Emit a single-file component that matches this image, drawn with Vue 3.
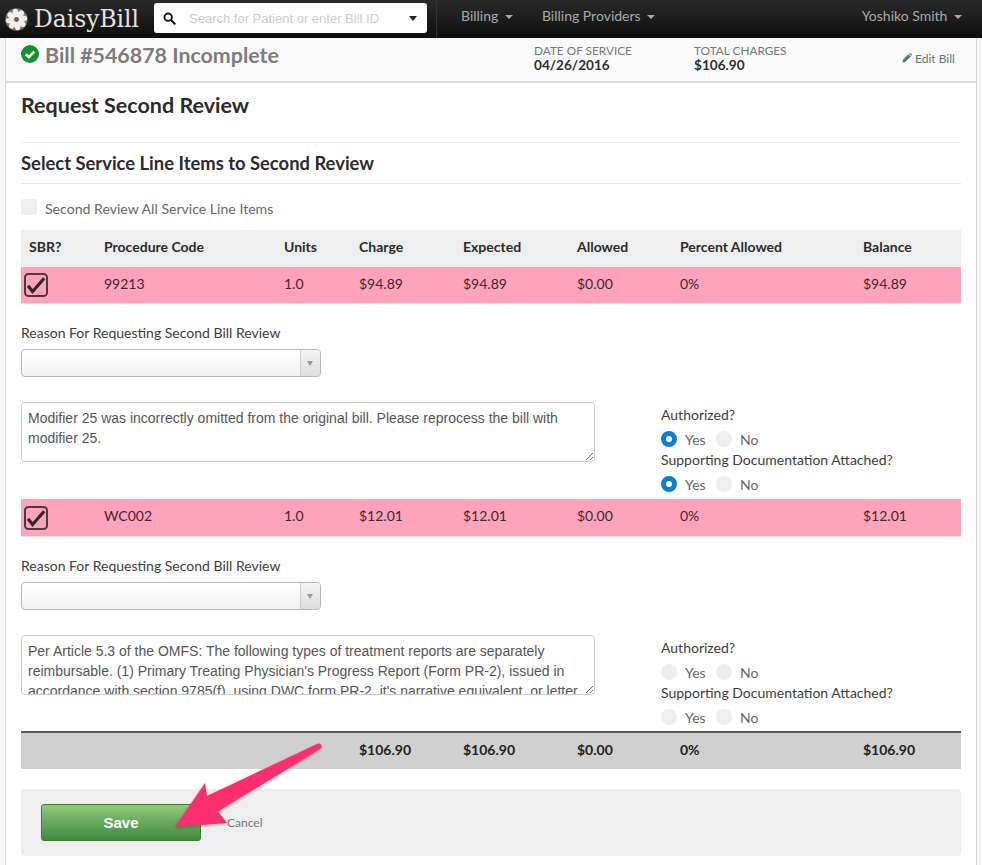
<script setup>
const columns = ['SBR?', 'Procedure Code', 'Units', 'Charge', 'Expected', 'Allowed', 'Percent Allowed', 'Balance']
const lines = [
  {
    code: '99213', units: '1.0', charge: '$94.89', expected: '$94.89', allowed: '$0.00', percent: '0%', balance: '$94.89',
    note: 'Modifier 25 was incorrectly omitted from the original bill. Please reprocess the bill with modifier 25.',
    answered: true
  },
  {
    code: 'WC002', units: '1.0', charge: '$12.01', expected: '$12.01', allowed: '$0.00', percent: '0%', balance: '$12.01',
    note: "Per Article 5.3 of the OMFS: The following types of treatment reports are separately reimbursable. (1) Primary Treating Physician's Progress Report (Form PR-2), issued in accordance with section 9785(f), using DWC form PR-2, it's narrative equivalent, or letter",
    answered: false
  }
]
const petals = [0, 45, 90, 135, 180, 225, 270, 315]
</script>

<template>
  <div class="screen">
    <header class="nav">
      <div class="brand">
        <svg class="flower" viewBox="0 0 23 23" width="23" height="23">
          <circle cx="11.5" cy="11.5" r="11.2" fill="#7d726c" />
          <ellipse v-for="a in petals" :key="a" cx="10.4" cy="5.2" rx="2.9" ry="4.4" fill="#f1eeec" :transform="`rotate(${a} 11.5 11.5)`" />
          <circle cx="11.5" cy="11.5" r="2.4" fill="#6d625d" />
        </svg>
        <span class="brand-name">DaisyBill</span>
      </div>
      <div class="search">
        <svg class="glass" viewBox="0 0 14 14" width="13" height="13">
          <circle cx="5.6" cy="5.6" r="4" fill="none" stroke="#111" stroke-width="2" />
          <path d="M8.6 8.6 L12.6 12.6" stroke="#111" stroke-width="2.2" stroke-linecap="round" />
        </svg>
        <span class="placeholder">Search for Patient or enter Bill ID</span>
        <i class="search-caret"></i>
      </div>
      <nav class="menu">
        <span class="menu-item first">Billing <i class="caret"></i></span>
        <span class="menu-item second">Billing Providers <i class="caret"></i></span>
      </nav>
      <span class="menu-item user">Yoshiko Smith <i class="caret"></i></span>
    </header>

    <main class="page">
      <section class="bill-head">
        <div class="bill-title">
          <svg viewBox="0 0 18 18" width="18" height="18">
            <circle cx="9" cy="9" r="9" fill="#12912c" />
            <path d="M4.8 9.2 L7.8 12.1 L13.2 6.6" fill="none" stroke="#fff" stroke-width="2.6" />
          </svg>
          <h1>Bill #546878 Incomplete</h1>
        </div>
        <div class="meta date">
          <span>DATE OF SERVICE</span>
          <strong>04/26/2016</strong>
        </div>
        <div class="meta total">
          <span>TOTAL CHARGES</span>
          <strong>$106.90</strong>
        </div>
        <a class="edit">
          <svg viewBox="0 0 12 12" width="10" height="10">
            <path d="M0.5 11.5 L1.2 8.2 L7.8 1.6 L10.4 4.2 L3.8 10.8 Z M8.6 0.8 L9.4 0.3 Q10 0 10.5 0.4 L11.6 1.5 Q12 2 11.7 2.6 L11.2 3.4 Z" fill="#4f7a63" />
          </svg>
          Edit Bill
        </a>
      </section>

      <section class="content">
        <h2>Request Second Review</h2>
        <h3>Select Service Line Items to Second Review</h3>

        <label class="all">
          <i class="blank-box"></i>
          <span>Second Review All Service Line Items</span>
        </label>

        <div class="row head">
          <span v-for="c in columns" :key="c">{{ c }}</span>
        </div>

        <template v-for="(line, i) in lines" :key="line.code">
          <div class="row item" :class="{ tall: i === 1 }">
            <span class="box-cell">
              <svg viewBox="0 0 24 24" width="24" height="24">
                <rect x="1" y="1" width="22" height="22" rx="3.5" fill="none" stroke="#4a3843" stroke-width="2" />
                <path d="M4 12.7 L8.6 18.6 L20.2 5.3" fill="none" stroke="#2e2830" stroke-width="3.2" />
              </svg>
            </span>
            <span>{{ line.code }}</span>
            <span>{{ line.units }}</span>
            <span>{{ line.charge }}</span>
            <span>{{ line.expected }}</span>
            <span>{{ line.allowed }}</span>
            <span>{{ line.percent }}</span>
            <span>{{ line.balance }}</span>
          </div>

          <div class="detail" :class="{ short: i === 1 }">
            <div class="reason">
              <label>Reason For Requesting Second Bill Review</label>
              <div class="select"><span class="select-arrow"></span></div>
              <textarea readonly :value="line.note"></textarea>
            </div>
            <div class="questions">
              <p>Authorized?</p>
              <div class="radios">
                <i class="radio" :class="{ on: line.answered }"></i><span class="yes">Yes</span>
                <i class="radio"></i><span>No</span>
              </div>
              <p>Supporting Documentation Attached?</p>
              <div class="radios">
                <i class="radio" :class="{ on: line.answered }"></i><span class="yes">Yes</span>
                <i class="radio"></i><span>No</span>
              </div>
            </div>
          </div>
        </template>

        <div class="row totals">
          <span></span><span></span><span></span>
          <span>$106.90</span>
          <span>$106.90</span>
          <span>$0.00</span>
          <span>0%</span>
          <span>$106.90</span>
        </div>

        <div class="actions">
          <button class="save">Save</button>
          <a class="cancel">Cancel</a>
        </div>
      </section>
    </main>

    <svg class="arrow" viewBox="0 0 982 865" width="982" height="865">
      <defs>
        <filter id="arrow-shadow" x="-20%" y="-20%" width="140%" height="140%">
          <feDropShadow dx="0" dy="1" stdDeviation="1.5" flood-color="#000" flood-opacity="0.3" />
        </filter>
      </defs>
      <path
        d="M318.5 743.5 Q322 744 321.5 747.5 Q320 749 317 751 L218 811.5 L227 823 L175 827 L205 783 L207 796 L317 744 Z"
        fill="#fb2e6e"
        filter="url(#arrow-shadow)"
      />
    </svg>
  </div>
</template>

<style scoped>
.screen {
  position: relative;
  width: 982px;
  height: 865px;
  overflow: hidden;
  background: #f6f6f6;
  font-family: Lato, "Liberation Sans", sans-serif;
  font-size: 14px;
  color: #333;
}
.nav {
  display: flex;
  align-items: flex-start;
  height: 38px;
  box-sizing: border-box;
  background: linear-gradient(#2a2a2a, #0e0e0e);
}
.brand {
  display: flex;
  align-items: center;
  width: 154px;
  height: 38px;
  padding-left: 5px;
  box-sizing: border-box;
  flex: none;
}
.flower { flex: none; }
.brand-name {
  margin-left: 6px;
  font-family: "DejaVu Serif", serif;
  font-size: 23.4px;
  color: #e6e3e0;
  white-space: nowrap;
}
.search {
  display: flex;
  align-items: center;
  width: 273px;
  height: 30px;
  margin-top: 3px;
  background: #fff;
  border-radius: 3px;
  box-sizing: border-box;
  padding-left: 9px;
  flex: none;
}
.glass { flex: none; }
.placeholder {
  margin-left: 13px;
  font-family: "Liberation Sans", sans-serif;
  font-size: 13px;
  color: #ccc;
  white-space: nowrap;
}
.search-caret {
  margin-left: auto;
  margin-right: 10px;
  border-left: 4.5px solid transparent;
  border-right: 4.5px solid transparent;
  border-top: 5px solid #222;
}
.menu {
  display: flex;
  height: 38px;
  margin-left: 9px;
  border-left: 1px solid #333;
  padding-left: 24px;
  box-sizing: border-box;
  flex: none;
}
.menu-item {
  line-height: 32px;
  font-size: 14px;
  color: #a9a9a9;
  white-space: nowrap;
}
.menu-item.second { margin-left: 29px; }
.user { margin-left: auto; margin-right: 20px; }
.caret {
  display: inline-block;
  margin-left: 3px;
  vertical-align: 2px;
  border-left: 4px solid transparent;
  border-right: 4px solid transparent;
  border-top: 4px solid #a9a9a9;
}
.page {
  width: 972px;
  margin-left: 5px;
  box-sizing: border-box;
  height: 827px;
  background: #fff;
  border-left: 1px solid #d8d8d8;
  border-right: 1px solid #d8d8d8;
}
.bill-head {
  display: flex;
  align-items: flex-start;
  height: 45px;
  box-sizing: border-box;
  padding-left: 15px;
  background: #fafafa;
  border-bottom: 2px solid #ddd;
}
.bill-title {
  display: flex;
  align-items: center;
  gap: 6px;
  width: 513px;
  height: 33px;
  flex: none;
}
.bill-title svg { flex: none; margin-top: -1px; }
h1 {
  margin: 0;
  font-size: 21.4px;
  font-weight: 700;
  color: #7d7d7d;
  white-space: nowrap;
}
.meta {
  display: flex;
  flex-direction: column;
  padding-top: 6px;
  flex: none;
  line-height: 14px;
}
.meta span { font-size: 11.8px; color: #777; white-space: nowrap; }
.meta strong { font-size: 13.6px; font-weight: 700; color: #2f2f2f; }
.date { width: 160px; }
.total { width: 208px; }
.edit {
  margin-top: 13px;
  font-size: 12px;
  color: #5b7a6a;
  white-space: nowrap;
}
.content {
  padding: 0 15px;
}
h2 {
  margin: 0;
  padding-top: 10px;
  height: 60px;
  box-sizing: border-box;
  line-height: 24px;
  font-size: 21.5px;
  font-weight: 700;
  color: #2b2b2b;
  border-bottom: 1px solid #eee;
}
h3 {
  margin: 0;
  height: 41px;
  box-sizing: border-box;
  padding-top: 10px;
  line-height: 20px;
  font-size: 18.4px;
  font-weight: 700;
  color: #2b2b2b;
  border-bottom: 1px solid #e6e6e6;
}
.all {
  display: flex;
  align-items: center;
  height: 46px;
  color: #666;
  font-size: 14.1px;
}
.all span { margin-top: 3px; margin-left: 8px; }
.blank-box {
  width: 16px;
  height: 16px;
  border-radius: 3px;
  background: #eee;
  margin-top: -1px;
}
.row {
  display: grid;
  grid-template-columns: 83px 180px 75px 104px 114px 103px 183px 98px;
  align-items: center;
  height: 37px;
}
.row > span { margin-bottom: 3px; }
.row > span:first-child { padding-left: 8px; }
.head {
  background: #eee;
  font-weight: 700;
  color: #2b2b2b;
  box-sizing: border-box;
}
.head > span { margin-bottom: 5px; }
.item {
  background: #ffa3bd;
  color: #3b2a30;
  border-bottom: 1px solid #f3dfe5;
  box-sizing: border-box;
}
.item.tall { height: 38px; }
.item.tall > span { margin-bottom: 4px; }
.row > span.box-cell {
  display: flex;
  padding-left: 3px;
  margin-bottom: 0;
}
.detail {
  display: grid;
  grid-template-columns: 640px 1fr;
  height: 195px;
}
.detail.short { height: 194px; }
.reason { padding-top: 20px; }
.reason label {
  display: block;
  line-height: 18px;
  color: #3d3d3d;
}
.select {
  position: relative;
  width: 300px;
  height: 28px;
  margin-top: 7px;
  box-sizing: border-box;
  border: 1px solid #b9b9b9;
  border-radius: 4px;
  background: linear-gradient(#fff, #f2f2f2);
}
.select-arrow {
  position: absolute;
  top: 0;
  right: 0;
  bottom: 0;
  width: 19px;
  border-left: 1px solid #ccc;
  background: linear-gradient(#f4f4f4, #dedede);
  border-radius: 0 3px 3px 0;
}
.select-arrow::after {
  content: "";
  position: absolute;
  top: 11px;
  left: 6px;
  border-left: 3px solid transparent;
  border-right: 3px solid transparent;
  border-top: 5px solid #999;
}
textarea {
  display: block;
  width: 574px;
  height: 60px;
  margin-top: 25px;
  padding: 5px 6px;
  box-sizing: border-box;
  border: 1px solid #ccc;
  border-radius: 4px;
  font-family: "Liberation Sans", sans-serif;
  font-size: 14px;
  line-height: 20px;
  color: #555;
  overflow: hidden;
  resize: vertical;
  outline: none;
}
.questions {
  padding-top: 102px;
  color: #3d3d3d;
}
.questions p {
  margin: 0;
  line-height: 18px;
}
.radios {
  display: flex;
  align-items: center;
  height: 22px;
  margin-top: 5px;
  margin-bottom: 0;
  color: #666;
}
.radios span { margin-left: 8px; line-height: 22px; }
.radios .yes { width: 31px; }
.radio {
  width: 16px;
  height: 16px;
  border-radius: 50%;
  background: #eee;
  box-sizing: border-box;
  margin-top: -3px;
}
.radio.on {
  background: #fff;
  border: 5px solid #0a7ed4;
}
.totals {
  height: 38px;
  box-sizing: border-box;
  border-top: 2px solid #5a5a5a;
  background: #d0d0d0;
  font-weight: 700;
  color: #222;
}
.totals > span { margin-bottom: 4px; }
.actions {
  display: flex;
  align-items: center;
  height: 67px;
  margin-top: 20px;
  padding-left: 20px;
  border-radius: 4px;
  background: #eee;
}
.save {
  width: 160px;
  height: 37px;
  padding: 0;
  border: 1px solid #3f7b37;
  border-radius: 3px;
  background: linear-gradient(#90c97e, #3f8a3c);
  color: #fff;
  font-family: "Liberation Sans", sans-serif;
  font-size: 15px;
  font-weight: 700;
}
.cancel {
  margin-left: 26px;
  font-size: 12px;
  color: #777;
}
.arrow {
  position: absolute;
  top: 0;
  left: 0;
  pointer-events: none;
}
</style>

<style>
body { margin: 0; }
</style>
